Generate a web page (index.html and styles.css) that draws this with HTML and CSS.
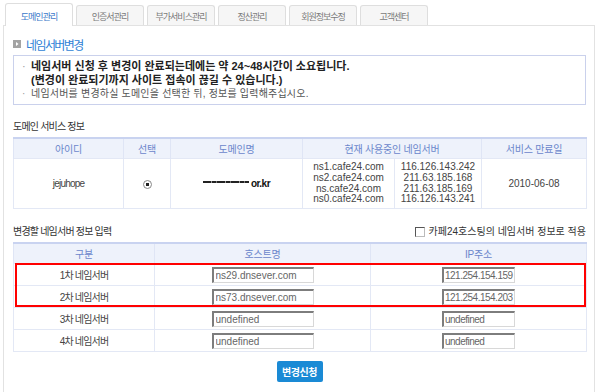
FILE: index.html
```html
<!DOCTYPE html>
<html lang="ko">
<head>
    <meta charset="UTF-8">
    <meta name="viewport" content="width=device-width, initial-scale=1.0">
    <title>네임서버변경</title>
    <link rel="stylesheet" href="styles.css">
</head>
<body>
    <div class="tabs">
        <div class="tab on">도메인관리</div>
        <div class="tab">인증서관리</div>
        <div class="tab">부가서비스관리</div>
        <div class="tab">정산관리</div>
        <div class="tab">회원정보수정</div>
        <div class="tab">고객센터</div>
    </div>

    <div class="panel">
        <h1 class="title">
            <svg class="title-icon" width="8" height="8" viewBox="0 0 8 8">
                <rect width="8" height="8" fill="#a3a3a3"/>
                <path d="M3 2 L5.5 4 L3 6 Z" fill="#fff"/>
            </svg>
            네임서버변경
        </h1>

        <ul class="notice">
            <li class="strong"><span class="dot">·</span><span>네임서버 신청 후 변경이 완료되는데에는 약 24~48시간이 소요됩니다.<br>(변경이 완료되기까지 사이트 접속이 끊길 수 있습니다.)</span></li>
            <li class="plain"><span class="dot">·</span><span>네임서버를 변경하실 도메인을 선택한 뒤, 정보를 입력해주십시오.</span></li>
        </ul>

        <h2 class="section-title">도메인 서비스 정보</h2>
        <table class="grid info">
            <colgroup>
                <col class="c-id"><col class="c-sel"><col class="c-dom"><col class="c-ns"><col class="c-ip"><col class="c-exp">
            </colgroup>
            <thead>
                <tr>
                    <th>아이디</th>
                    <th>선택</th>
                    <th>도메인명</th>
                    <th colspan="2">현재 사용중인 네임서버</th>
                    <th>서비스 만료일</th>
                </tr>
            </thead>
            <tbody>
                <tr>
                    <td>jejuhope</td>
                    <td><span class="radio"></span></td>
                    <td><span class="hidden-name"></span> <b>or.kr</b></td>
                    <td class="lines">ns1.cafe24.com<br>ns2.cafe24.com<br>ns.cafe24.com<br>ns0.cafe24.com</td>
                    <td class="lines">116.126.143.242<br>211.63.185.168<br>211.63.185.169<br>116.126.143.241</td>
                    <td class="num">2010-06-08</td>
                </tr>
            </tbody>
        </table>

        <div class="sub-head">
            <h2 class="section-title">변경할 네임서버 정보 입력</h2>
            <label class="apply"><span class="check"></span>카페24호스팅의 네임서버 정보로 적용</label>
        </div>
        <div class="input-wrap">
            <table class="grid change">
                <colgroup>
                    <col class="c-kind"><col class="c-host"><col class="c-addr">
                </colgroup>
                <thead>
                    <tr>
                        <th>구분</th>
                        <th>호스트명</th>
                        <th>IP주소</th>
                    </tr>
                </thead>
                <tbody>
                    <tr>
                        <td>1차 네임서버</td>
                        <td><input class="host" type="text" value="ns29.dnsever.com"></td>
                        <td><input class="addr" type="text" value="121.254.154.159"></td>
                    </tr>
                    <tr>
                        <td>2차 네임서버</td>
                        <td><input class="host" type="text" value="ns73.dnsever.com"></td>
                        <td><input class="addr" type="text" value="121.254.154.203"></td>
                    </tr>
                    <tr>
                        <td>3차 네임서버</td>
                        <td><input class="host" type="text" value="undefined"></td>
                        <td><input class="addr" type="text" value="undefined"></td>
                    </tr>
                    <tr>
                        <td>4차 네임서버</td>
                        <td><input class="host" type="text" value="undefined"></td>
                        <td><input class="addr" type="text" value="undefined"></td>
                    </tr>
                </tbody>
            </table>
            <div class="mark"></div>
        </div>

        <div class="submit-wrap">
            <button class="submit">변경신청</button>
        </div>
    </div>
</body>
</html>
```

FILE: styles.css
```css
body {
    margin: 0;
    font-family: "Liberation Sans", "Noto Sans CJK KR", sans-serif;
    font-size: 10px;
    letter-spacing: -0.8px;
    color: #444;
    background-color: #fff;
}
.tabs {
    display: flex;
    align-items: flex-end;
    gap: 3px;
    width: 592px;
    height: 26px;
    box-sizing: border-box;
    margin-left: 3px;
    padding-left: 2px;
    border-bottom: 1px solid #e2e2e2;
}
.tab {
    width: 68px;
    height: 20px;
    box-sizing: border-box;
    display: flex;
    align-items: center;
    justify-content: center;
    border: 1px solid #dedede;
    border-bottom: none;
    border-radius: 3px 3px 0 0;
    background-color: #f6f6f6;
    color: #7a7a7a;
    font-size: 9px;
    letter-spacing: -1px;
    padding-top: 2px;
}
.tab.on {
    height: 23px;
    margin-bottom: -1px;
    background-color: #fff;
    color: #3b78c9;
}
.panel {
    width: 592px;
    min-height: 366px;
    box-sizing: border-box;
    margin-left: 3px;
    padding: 10px 8px 10px 9px;
    border: 1px solid #e2e2e2;
    border-top: none;
}
.title {
    display: flex;
    align-items: center;
    gap: 5px;
    height: 16px;
    margin: 0;
    font-size: 12px;
    font-weight: normal;
    letter-spacing: -1.6px;
    color: #2f7fd6;
}
.notice {
    list-style: none;
    margin: 3px 0 0;
    padding: 3px 0 3px 8px;
    border: 1px solid #cad1ec;
    line-height: 14px;
}
.notice li {
    display: flex;
}
.notice .dot {
    width: 9px;
    flex: none;
    color: #999;
    font-weight: normal;
}
.notice .strong {
    font-size: 11px;
    font-weight: bold;
    letter-spacing: 0;
    color: #222;
}
.notice .plain {
    color: #555;
    letter-spacing: 0.2px;
}
.section-title {
    margin: 15px 0 0;
    font-size: 10px;
    font-weight: normal;
    line-height: 14px;
    color: #333;
}
.grid {
    width: 573px;
    margin-top: 3px;
    border-collapse: collapse;
    table-layout: fixed;
}
.grid th {
    height: 19px;
    padding: 0;
    background-color: #eef2fb;
    border-top: 2px solid #c9d3f0;
    border-left: 1px solid #dfe5f5;
    border-right: 1px solid #dfe5f5;
    color: #6b86cb;
    font-weight: normal;
    letter-spacing: -0.2px;
    text-align: center;
}
.grid td {
    padding: 0;
    border: 1px solid #e3e8f5;
    text-align: center;
    color: #444;
}
.c-id { width: 110px; }
.c-sel { width: 47px; }
.c-dom { width: 132px; }
.c-ns { width: 92px; }
.c-ip { width: 87px; }
.c-exp { width: 105px; }
.info td {
    height: 49px;
}
.info .lines {
    line-height: 10.7px;
    letter-spacing: 0;
}
.info .num {
    letter-spacing: 0;
}
.radio {
    display: inline-block;
    width: 7px;
    height: 7px;
    border: 1px solid #888;
    border-radius: 50%;
    background: radial-gradient(circle, #222 0 1.6px, #fff 2px);
    vertical-align: middle;
}
.hidden-name {
    display: inline-block;
    width: 46px;
    height: 2px;
    vertical-align: 4px;
    background: repeating-linear-gradient(90deg, #222 0 8px, #999 8px 9px, #222 9px 13px, #777 13px 14px);
}
.info b {
    color: #111;
    letter-spacing: -0.5px;
}
.sub-head {
    display: flex;
    justify-content: space-between;
    align-items: flex-end;
    margin-top: 16px;
}
.sub-head .section-title {
    margin: 0;
}
.apply {
    display: flex;
    align-items: center;
    gap: 4px;
    line-height: 14px;
    letter-spacing: 0;
    color: #333;
}
.check {
    width: 8px;
    height: 8px;
    border: 1px solid;
    border-color: #555 #bbb #bbb #555;
    background-color: #fff;
}
.input-wrap {
    position: relative;
}
.c-kind { width: 141px; }
.c-host { width: 216px; }
.c-addr { width: 216px; }
.change td {
    height: 21px;
}
.host, .addr {
    height: 16px;
    box-sizing: border-box;
    margin: 0;
    padding: 0 0 0 2px;
    border-style: solid;
    border-width: 2px 1px 1px 2px;
    border-color: #7d7d7d #d8d8d8 #d8d8d8 #7d7d7d;
    font-family: "Liberation Sans", sans-serif;
    font-size: 10px;
    letter-spacing: 0;
    color: #666;
    vertical-align: middle;
}
.host { width: 102px; }
.addr {
    width: 73px;
    padding-left: 1px;
    letter-spacing: -0.5px;
}
.mark {
    position: absolute;
    left: 2px;
    top: 21px;
    width: 571px;
    height: 44px;
    box-sizing: border-box;
    border: 2px solid #f00;
}
.submit-wrap {
    margin-top: 9px;
    text-align: center;
}
.submit {
    width: 46px;
    height: 21px;
    padding: 0;
    border: none;
    border-radius: 2px;
    background-color: #1a8ad5;
    color: #fff;
    font-family: inherit;
    font-size: 10px;
    font-weight: bold;
    letter-spacing: -0.5px;
}
```
